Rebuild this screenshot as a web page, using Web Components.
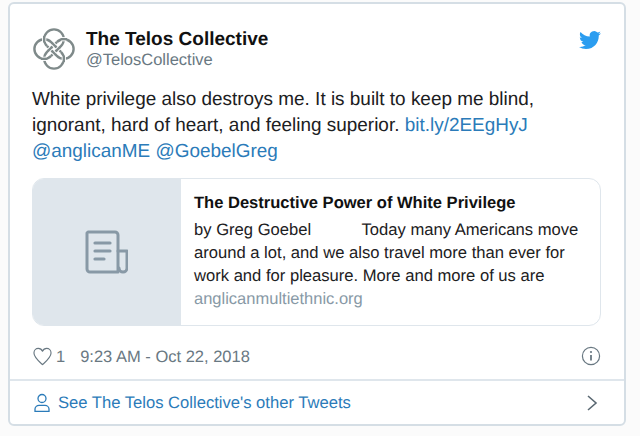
<!DOCTYPE html>
<html>
<head>
<meta charset="utf-8">
<title>Tweet</title>
<style>
  html, body { margin: 0; padding: 0; background: #fbfbfb; }
  body { font-family: "Liberation Sans", Arial, sans-serif; height: 436px; overflow: hidden; text-rendering: geometricPrecision; }
</style>
</head>
<body>
<tweet-embed>
  <tweet-header slot="header" name="The Telos Collective" handle="@TelosCollective"></tweet-header>
  <tweet-text slot="text">White privilege also destroys me. It is built to keep me blind, ignorant, hard of heart, and feeling superior. <a>bit.ly/2EEgHyJ</a> <a>@anglicanME</a> <a>@GoebelGreg</a></tweet-text>
  <link-card slot="card" title="The Destructive Power of White Privilege" domain="anglicanmultiethnic.org">by Greg Goebel &nbsp; &nbsp; &nbsp; &nbsp; &nbsp; Today many Americans move around a lot, and we also travel more than ever for work and for pleasure. More and more of us are</link-card>
  <tweet-meta slot="meta" likes="1" time="9:23 AM - Oct 22, 2018"></tweet-meta>
  <more-link slot="more">See The Telos Collective's other Tweets</more-link>
</tweet-embed>

<script>
class TweetEmbed extends HTMLElement {
  constructor() {
    super();
    this.attachShadow({ mode: "open" });
    this.shadowRoot.innerHTML = `
      <style>
        :host {
          display: block;
          box-sizing: border-box;
          width: 618px;
          height: 424px;
          margin: 2px 0 0 8px;
          background: #fff;
          border: 2px solid #d5dee5;
          border-radius: 6px;
          color: #1c2022;
        }
        #main {
          padding: 24px 23px 0 22px;
          height: 375px;
          box-sizing: border-box;
        }
      </style>
      <div id="main">
        <slot name="header"></slot>
        <slot name="text"></slot>
        <slot name="card"></slot>
        <slot name="meta"></slot>
      </div>
      <slot name="more"></slot>
    `;
  }
}

class TweetHeader extends HTMLElement {
  constructor() {
    super();
    this.attachShadow({ mode: "open" });
    this.shadowRoot.innerHTML = `
      <style>
        :host { display: flex; align-items: flex-start; }
        #logo { width: 42px; height: 42px; flex: none; margin: 0 11px 0 1px; }
        #who { flex: 1; padding-top: 1px; }
        #name { font-size: 19px; font-weight: bold; line-height: 22px; color: #111; }
        #handle { font-size: 16.5px; line-height: 19px; color: #697882; }
        #bird { width: 22px; height: 22px; flex: none; margin: 1px 0 0 0; fill: #2b9df0; }
        .strand { stroke: #7f8a8a; stroke-width: 2.4; }
        .halo { stroke: #fff; stroke-width: 4.2; }
      </style>
      <svg id="logo" viewBox="0 0 42 42" fill="none">
        <defs>
          <!-- one lobe of the knot and the straight run to the next lobe -->
          <path id="lobe" class="strand" d="M14.07 18.13 A9.8 9.8 0 1 1 27.93 18.13 L18.13 27.93"/>
          <g id="over">
            <path class="halo" d="M11.2 8.6 V13.8"/>
            <path class="strand" d="M11.2 8 V14.4"/>
            <path class="halo" d="M26.6 19.46 L23.5 22.54"/>
            <path class="strand" d="M27 19.06 L23.1 22.94"/>
          </g>
        </defs>
        <use href="#lobe"/>
        <use href="#lobe" transform="rotate(90 21 21)"/>
        <use href="#lobe" transform="rotate(180 21 21)"/>
        <use href="#lobe" transform="rotate(270 21 21)"/>
        <use href="#over"/>
        <use href="#over" transform="rotate(90 21 21)"/>
        <use href="#over" transform="rotate(180 21 21)"/>
        <use href="#over" transform="rotate(270 21 21)"/>
      </svg>
      <div id="who">
        <div id="name"></div>
        <div id="handle"></div>
      </div>
      <svg id="bird" viewBox="0 0 24 24"><path d="M23.95 4.57a10 10 0 0 1-2.82.77 4.96 4.96 0 0 0 2.16-2.72c-.95.55-2 .96-3.13 1.19a4.92 4.92 0 0 0-8.38 4.48C7.69 8.1 4.07 6.13 1.64 3.16a4.82 4.82 0 0 0-.67 2.48c0 1.71.87 3.21 2.19 4.1a4.9 4.9 0 0 1-2.23-.62v.06c0 2.39 1.7 4.38 3.95 4.83a5 5 0 0 1-2.21.09 4.94 4.94 0 0 0 4.6 3.42 9.87 9.87 0 0 1-6.1 2.1c-.39 0-.78-.02-1.17-.07a13.9 13.9 0 0 0 7.55 2.21c9.06 0 14-7.5 14-13.98 0-.21 0-.42-.02-.63a9.94 9.94 0 0 0 2.46-2.55z"/></svg>
    `;
    this.shadowRoot.querySelector("#name").textContent = this.getAttribute("name");
    this.shadowRoot.querySelector("#handle").textContent = this.getAttribute("handle");
  }
}

class TweetText extends HTMLElement {
  constructor() {
    super();
    this.attachShadow({ mode: "open" });
    this.shadowRoot.innerHTML = `
      <style>
        :host {
          display: block;
          margin-top: 17px;
          font-size: 18.95px;
          line-height: 26px;
          color: #1c2022;
        }
        ::slotted(a) { color: #2b7bb9; }
      </style>
      <slot></slot>
    `;
  }
}

class LinkCard extends HTMLElement {
  constructor() {
    super();
    this.attachShadow({ mode: "open" });
    this.shadowRoot.innerHTML = `
      <style>
        :host {
          display: flex;
          box-sizing: border-box;
          height: 148px;
          margin-top: 13px;
          border: 1px solid #dfe6ec;
          border-radius: 12px;
          overflow: hidden;
        }
        #thumb {
          flex: none;
          width: 148px;
          background: #dfe6ec;
          display: flex;
          align-items: center;
          justify-content: center;
        }
        #thumb svg { width: 44px; height: 44px; margin: -1px 3px 0 0; }
        #body { flex: 1; padding: 13px 12px 0 13px; min-width: 0; }
        #title { font-size: 16.55px; font-weight: bold; line-height: 22px; color: #111; }
        #desc { font-size: 16.6px; line-height: 23px; margin-top: 4px; color: #1c2022; }
        #domain { font-size: 16.5px; line-height: 24px; margin-top: 0; color: #8899a6; }
      </style>
      <div id="thumb">
        <svg viewBox="0 0 44 44" fill="none" stroke="#8899a6" stroke-width="3" stroke-linejoin="round" stroke-linecap="round">
          <path d="M4 2 H31 a3 3 0 0 1 3 3 V42 H6 a3 3 0 0 1 -3 -3 V3 Z"/>
          <path d="M34 21 H43 V38 a4 4 0 0 1 -8 0"/>
          <path d="M11 13 H26 M11 21 H26 M11 29 H20" stroke-width="3.2"/>
        </svg>
      </div>
      <div id="body">
        <div id="title"></div>
        <div id="desc"><slot></slot></div>
        <div id="domain"></div>
      </div>
    `;
    this.shadowRoot.querySelector("#title").textContent = this.getAttribute("title");
    this.shadowRoot.querySelector("#domain").textContent = this.getAttribute("domain");
  }
}

class TweetMeta extends HTMLElement {
  constructor() {
    super();
    this.attachShadow({ mode: "open" });
    this.shadowRoot.innerHTML = `
      <style>
        :host {
          display: flex;
          align-items: center;
          margin-top: 19px;
          height: 24px;
          font-size: 16.5px;
          color: #697882;
        }
        #heart { width: 19px; height: 19px; flex: none; margin: -1px 4px 0 1px; }
        #likes { margin-right: 15px; }
        #time { flex: 1; }
        #info { width: 20px; height: 20px; flex: none; margin: -2px 0 0 0; }
      </style>
      <svg id="heart" viewBox="0 0 20 20" fill="none" stroke="#697882" stroke-width="1.2" stroke-linejoin="round">
        <path d="M10 18.6 C6 15 1 11 1 6.4 C1 3.4 3.2 1.4 5.6 1.4 C7.6 1.4 9.2 2.6 10 4.4 C10.8 2.6 12.4 1.4 14.4 1.4 C16.8 1.4 19 3.4 19 6.4 C19 11 14 15 10 18.6 Z"/>
      </svg>
      <span id="likes"></span>
      <span id="time"></span>
      <svg id="info" viewBox="0 0 20 20" fill="none" stroke="#697882">
        <circle cx="10" cy="10" r="8.6" stroke-width="1.2"/>
        <path d="M10 9 V14.5" stroke-width="1.8"/>
        <circle cx="10" cy="6" r="1.1" fill="#697882" stroke="none"/>
      </svg>
    `;
    this.shadowRoot.querySelector("#likes").textContent = this.getAttribute("likes");
    this.shadowRoot.querySelector("#time").textContent = this.getAttribute("time");
  }
}

class MoreLink extends HTMLElement {
  constructor() {
    super();
    this.attachShadow({ mode: "open" });
    this.shadowRoot.innerHTML = `
      <style>
        :host {
          display: flex;
          align-items: center;
          box-sizing: border-box;
          height: 45px;
          padding: 1px 26px 0 24px;
          border-top: 2px solid #dfe6ec;
          font-size: 16.6px;
          color: #2b7bb9;
        }
        #person { width: 16px; height: 20px; flex: none; margin-right: 8px; }
        #label { flex: 1; }
        #chev { width: 12px; height: 18px; flex: none; margin-top: -1px; }
      </style>
      <svg id="person" viewBox="0 0 16 20" fill="none" stroke="#2b7bb9" stroke-width="1.3">
        <circle cx="8" cy="5.5" r="4"/>
        <path d="M1 18.4 V16 C1 13.8 3 12.4 5 12.4 H11 C13 12.4 15 13.8 15 16 V18.4 Z"/>
      </svg>
      <span id="label"><slot></slot></span>
      <svg id="chev" viewBox="0 0 12 18" fill="none" stroke="#5a6872" stroke-width="1.6">
        <path d="M2 2 L10 9 L2 16"/>
      </svg>
    `;
  }
}

customElements.define("tweet-embed", TweetEmbed);
customElements.define("tweet-header", TweetHeader);
customElements.define("tweet-text", TweetText);
customElements.define("link-card", LinkCard);
customElements.define("tweet-meta", TweetMeta);
customElements.define("more-link", MoreLink);
</script>
</body>
</html>
